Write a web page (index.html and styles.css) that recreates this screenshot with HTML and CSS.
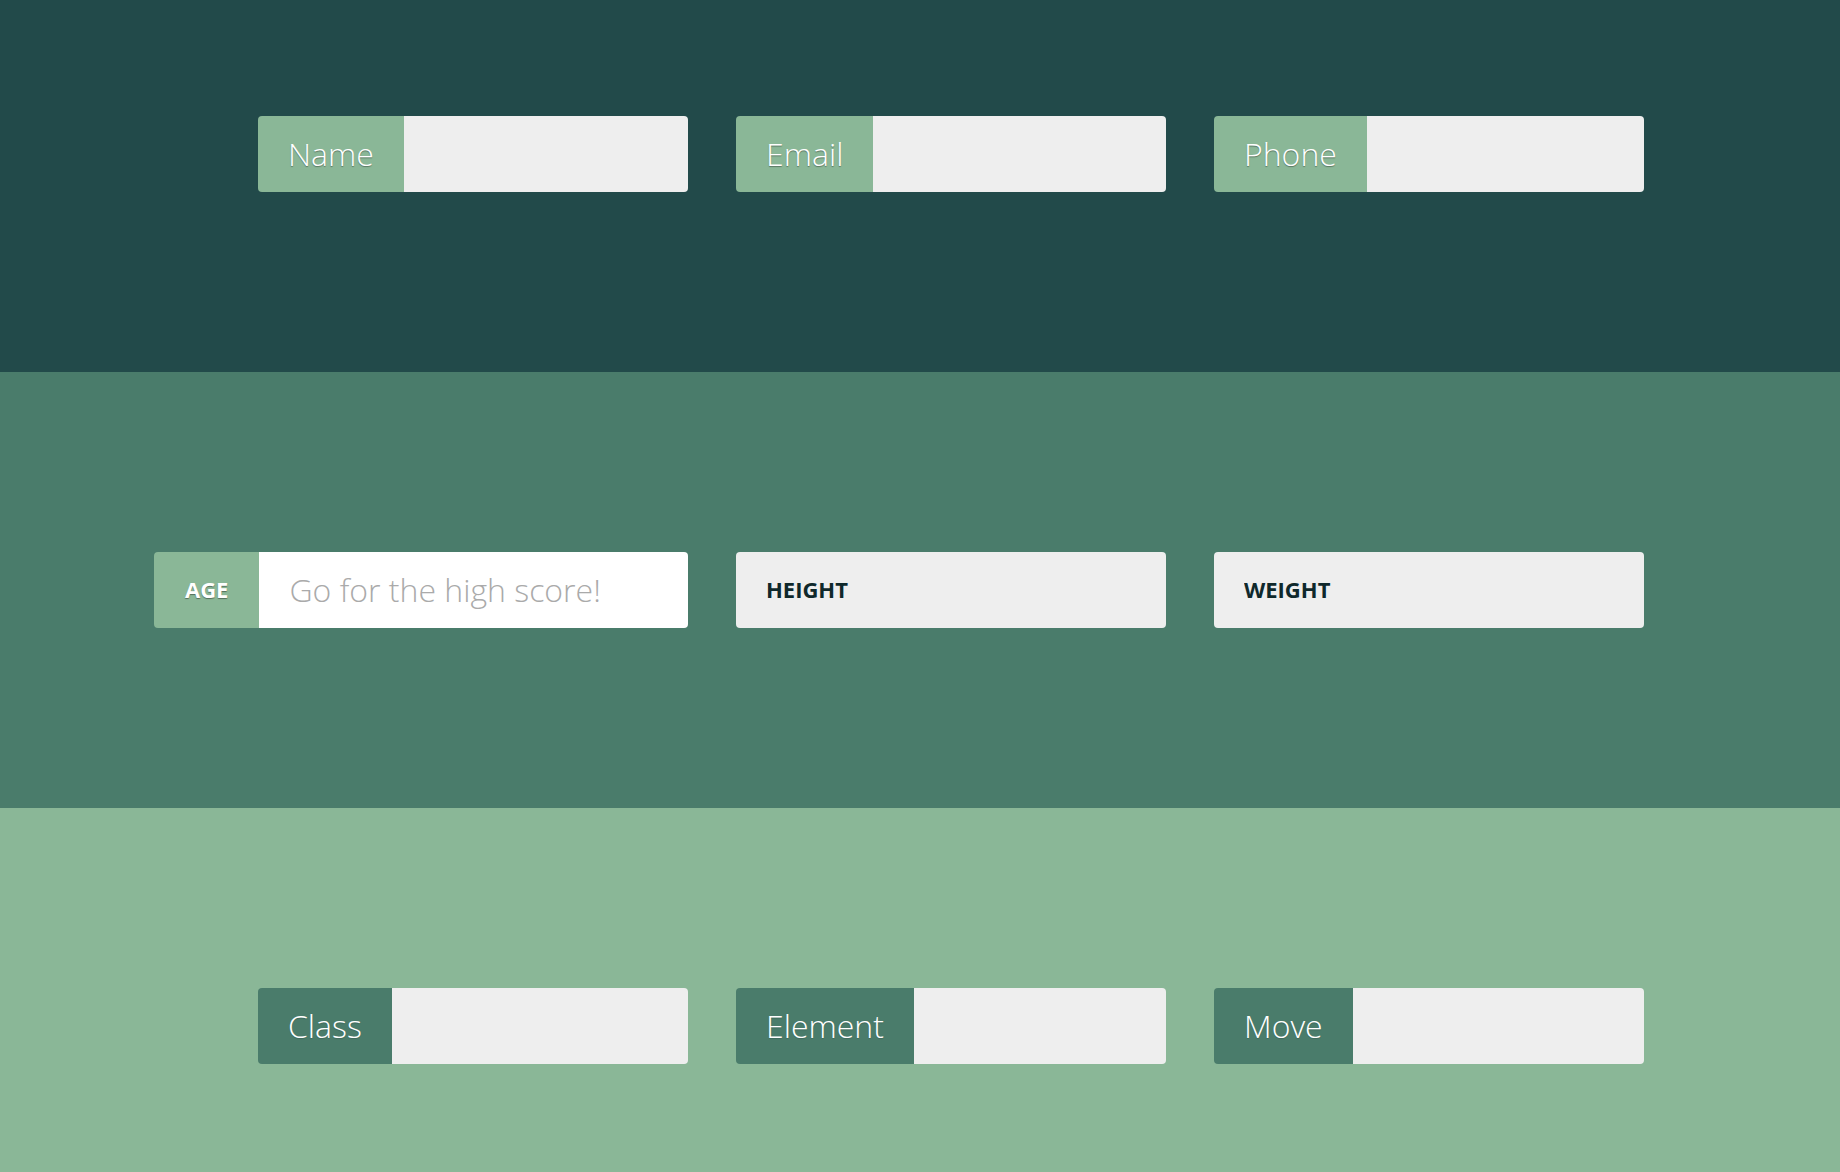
FILE: index.html
```html
<!DOCTYPE html>
<html lang="en">
<head>
  <meta charset="UTF-8" />
  <meta name="viewport" content="width=device-width, initial-scale=1.0" />
  <title>Input Groups</title>
  <link rel="stylesheet" href="styles.css">
</head>
<body>

  <!-- Dark band: labels on the left -->
  <section class="band band-dark">
    <div class="row">
      <label class="field">
        <span class="tag tag-light">Name</span>
        <input type="text" />
      </label>
      <label class="field">
        <span class="tag tag-light">Email</span>
        <input type="email" />
      </label>
      <label class="field">
        <span class="tag tag-light">Phone</span>
        <input type="tel" />
      </label>
    </div>
  </section>

  <!-- Mid band: small caps labels -->
  <section class="band band-mid">
    <div class="row">
      <label class="field field-wide">
        <span class="tag tag-light tag-small">Age</span>
        <input type="text" class="white" placeholder="Go for the high score!" />
      </label>
      <label class="field">
        <input type="text" class="caps" placeholder="Height" />
      </label>
      <label class="field">
        <input type="text" class="caps" placeholder="Weight" />
      </label>
    </div>
  </section>

  <!-- Light band -->
  <section class="band band-light">
    <div class="row">
      <label class="field">
        <span class="tag tag-dark">Class</span>
        <input type="text" />
      </label>
      <label class="field">
        <span class="tag tag-dark">Element</span>
        <input type="text" />
      </label>
      <label class="field">
        <span class="tag tag-dark">Move</span>
        <input type="text" />
      </label>
    </div>
  </section>

</body>
</html>
```

FILE: styles.css
```css
body {
  font-family: 'Open Sans', 'Noto Sans', sans-serif;
  margin: 0;
  padding: 0;
  overflow: hidden;
}
.band {
  padding: 180px 0;
}
.band-dark {
  background: #224a4a;
  padding-top: 116px;
}
.band-mid {
  background: #4a7c6b;
}
.band-light {
  background: #8ab797;
}
.row {
  display: flex;
  gap: 48px;
  padding-left: 258px;
}
.field {
  display: flex;
  width: 430px;
  height: 76px;
  border-radius: 4px;
  overflow: hidden;
}
.field-wide {
  width: 534px;
  margin-left: -104px;
}
.tag {
  display: flex;
  align-items: center;
  padding: 0 30px 2px;
  font-size: 32px;
  font-weight: 300;
  color: #fff;
  text-shadow: 0 1px 1px rgba(0, 0, 0, 0.35);
  white-space: nowrap;
}
.tag-light {
  background: #8ab797;
}
.tag-dark {
  background: #4a7c6b;
  text-shadow: 0 1px 1px rgba(0, 0, 0, 0.15);
}
.tag-small {
  padding: 0 31px 2px;
  font-size: 22px;
  font-weight: 700;
  text-transform: uppercase;
  text-shadow: 0 1px 1px rgba(0, 0, 0, 0.4);
}
input {
  flex: 1;
  min-width: 0;
  border: none;
  outline: none;
  margin: 0;
  padding: 0 30px 2px;
  background: #eeeeee;
  font-family: inherit;
  font-size: 32px;
  font-weight: 300;
  color: #333;
}
input.white {
  background: #fff;
}
input::placeholder {
  color: #aaa;
}
input.caps {
  font-size: 22px;
  font-weight: 700;
}
input.caps::placeholder {
  color: #0f282b;
  text-transform: uppercase;
}
```
